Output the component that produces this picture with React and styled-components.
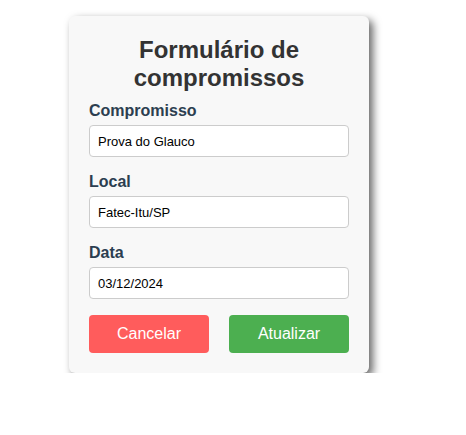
import React from 'react'
import styled, { createGlobalStyle } from 'styled-components'

const GlobalStyle = createGlobalStyle`
  body {
    margin: 8px;
    background: #fff;
    font-family: "Liberation Sans", Arial, sans-serif;
  }
`

const Page = styled.div`
  display: flex;
  padding: 8px 0 0 61px;
`

const Card = styled.form`
  width: 300px;
  box-sizing: border-box;
  padding: 20px;
  background: #f8f8f8;
  border-radius: 6px;
  box-shadow: 4px 4px 8px rgba(0, 0, 0, 0.6);
`

const Title = styled.h2`
  margin: 0 0 9px;
  font-size: 24px;
  font-weight: bold;
  color: #333;
  text-align: center;
`

const Label = styled.label`
  display: block;
  margin-bottom: 5px;
  font-size: 16px;
  line-height: 19px;
  font-weight: bold;
  color: #2c3e50;
`

const Input = styled.input`
  display: block;
  width: 100%;
  height: 32px;
  box-sizing: border-box;
  margin: 0 0 ${(p) => (p.$last ? '0' : '15px')};
  padding: 0 8px;
  border: 1px solid #ccc;
  border-radius: 4px;
  background: #fff;
  font-family: "Liberation Sans", Arial, sans-serif;
  font-size: 13px;
  color: #000;
  outline: none;
`

const Actions = styled.div`
  display: flex;
  justify-content: space-between;
  margin-top: 16px;
`

const Button = styled.button`
  width: 120px;
  height: 38px;
  border: none;
  border-radius: 4px;
  background: ${(p) => (p.$variant === 'cancel' ? '#ff5c5c' : '#4caf50')};
  color: #fff;
  font-family: "Liberation Sans", Arial, sans-serif;
  font-size: 16px;
  cursor: pointer;
`

const App = () => {
  return (
    <>
      <GlobalStyle />
      <Page>
        <Card onSubmit={(e) => e.preventDefault()}>
          <Title>Formulário de compromissos</Title>
          <Label>Compromisso</Label>
          <Input defaultValue="Prova do Glauco" />
          <Label>Local</Label>
          <Input defaultValue="Fatec-Itu/SP" />
          <Label>Data</Label>
          <Input defaultValue="03/12/2024" $last />
          <Actions>
            <Button type="button" $variant="cancel">Cancelar</Button>
            <Button type="submit">Atualizar</Button>
          </Actions>
        </Card>
      </Page>
    </>
  )
}

export default App
